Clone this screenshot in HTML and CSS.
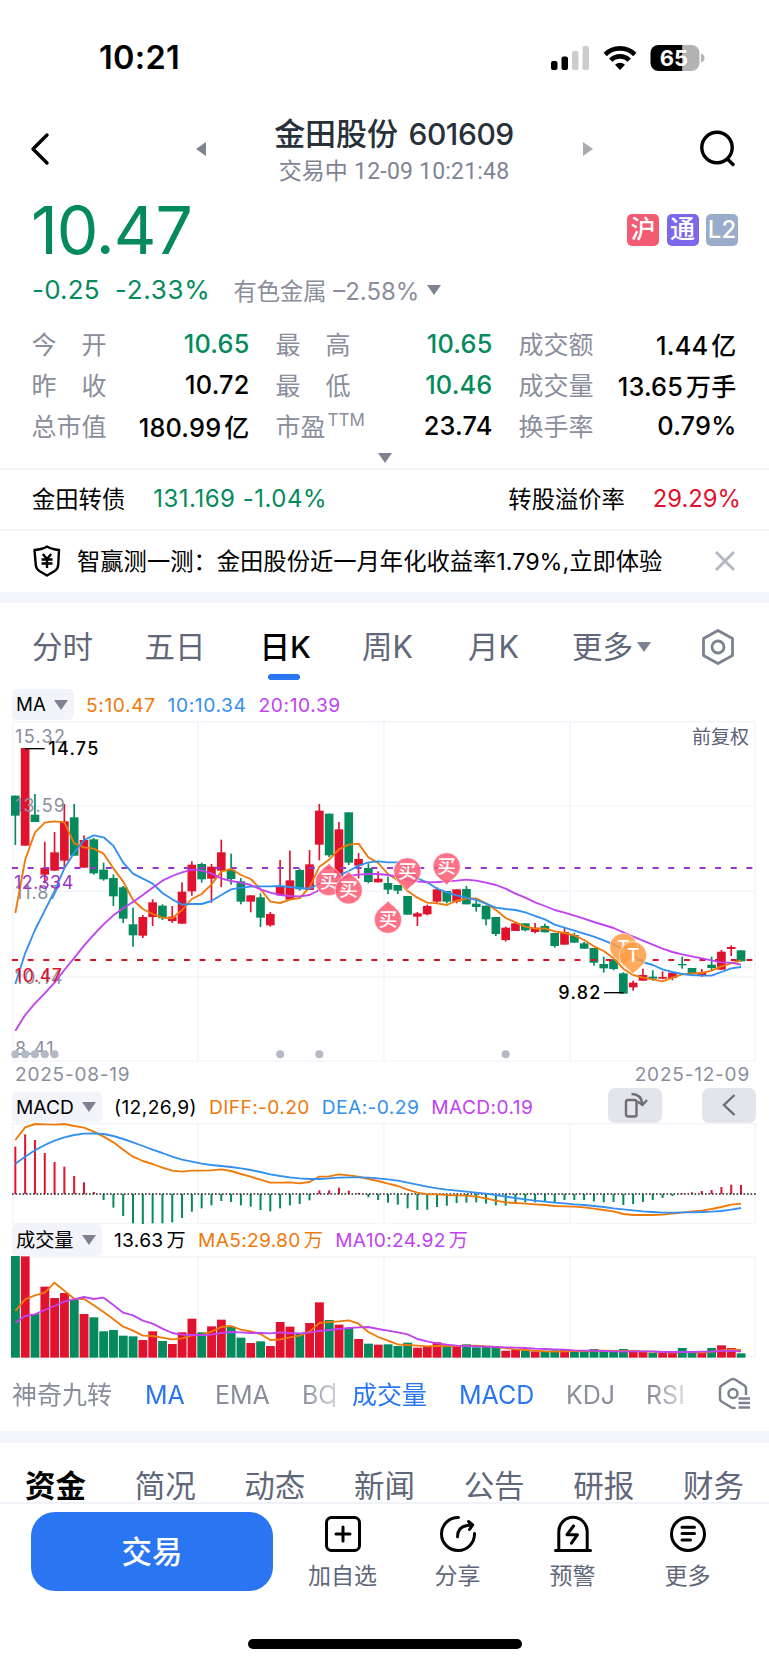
FILE: index.html
```html
<!DOCTYPE html>
<html lang="zh-CN">
<head>
    <meta charset="UTF-8">
    <meta name="viewport" content="width=device-width, initial-scale=1.0">
    <title>金田股份 601609</title>
    <link rel="stylesheet" href="styles.css">
</head>
<body>
    <header class="status-bar">
        <span class="clock">10:21</span>
        <svg class="status-icons" width="156" height="28" viewBox="0 0 156 28">
            <rect x="2" y="17" width="6.500" height="9" rx="2"/>
            <rect x="12.500" y="12.500" width="6.500" height="13.500" rx="2"/>
            <rect x="23" y="7" width="6.500" height="19" rx="2" fill="#ccc"/>
            <rect x="33.500" y="2" width="6.500" height="24" rx="2" fill="#ccc"/>
            <g fill="none" stroke="#000" stroke-width="4.600">
                <path d="M56.200 10.500a21 21 0 0 1 29.600 0"/>
                <path d="M61.700 16.200a13.200 13.200 0 0 1 18.600 0"/>
            </g>
            <path d="M66 20.800a7.200 7.200 0 0 1 10 0l-5 5.200z"/>
            <path d="M109.500 1h24v26h-24a8 8 0 0 1-8-8V9a8 8 0 0 1 8-8z"/>
            <path d="M133.500 1h9a8 8 0 0 1 8 8v10a8 8 0 0 1-8 8h-9z" fill="#b3b3b3"/>
            <path d="M152 9.500q3.500 1 3.500 4.500t-3.500 4.500z" fill="#b3b3b3"/>
            <text x="125" y="22" class="battery-text">65</text>
        </svg>
    </header>

    <nav class="title-bar">
        <svg class="back" width="20" height="34" viewBox="0 0 20 34"><path d="M17 3L3 17l14 14"/></svg>
        <i class="arrow-left"></i>
        <div class="title">
            <h1>金田股份 <span>601609</span></h1>
            <p>交易中 <span>12-09 10:21:48</span></p>
        </div>
        <i class="arrow-right"></i>
        <svg class="search" width="38" height="38" viewBox="0 0 38 38"><circle cx="17" cy="17.500" r="15.200"/><path d="M28.500 30l4.500 4.500"/></svg>
    </nav>

    <section class="price-row">
        <strong class="price">10.47</strong>
        <div class="badges">
            <span class="badge-sh">沪</span>
            <span class="badge-hk">通</span>
            <span class="badge-l2">L2</span>
        </div>
    </section>
    <section class="change-row">
        <span class="green diff">-0.25</span>
        <span class="green pct">-2.33%</span>
        <span class="sector">有色金属 <em>–2.58%</em></span>
        <i class="arrow-down"></i>
    </section>

    <section class="quotes">
        <div><label>今<b></b>开</label><span class="green">10.65</span></div>
        <div><label>最<b></b>高</label><span class="green">10.65</span></div>
        <div><label>成交额</label><span>1.44<u>亿</u></span></div>
        <div><label>昨<b></b>收</label><span>10.72</span></div>
        <div><label>最<b></b>低</label><span class="green">10.46</span></div>
        <div><label>成交量</label><span>13.65<u>万手</u></span></div>
        <div><label>总市值</label><span>180.99<u>亿</u></span></div>
        <div><label>市盈<sup>TTM</sup></label><span>23.74</span></div>
        <div><label>换手率</label><span>0.79%</span></div>
    </section>
    <div class="expand"><i class="arrow-down"></i></div>

    <section class="bond">
        <span class="bond-name">金田转债</span>
        <span class="green num">131.169 -1.04%</span>
        <span class="premium">转股溢价率</span>
        <span class="red">29.29%</span>
    </section>
    <section class="notice">
        <svg width="30" height="32" viewBox="0 0 30 32">
            <path d="M15 1.500c3 2 7 3 12 3.500l-.800 15c-.200 3-1.200 4.500-3.500 6L15 30.500 7.300 26c-2.300-1.500-3.300-3-3.500-6L2.500 5C8 4.500 12 3.500 15 1.500z"/>
            <path d="M10.800 9l4.200 5L19.200 9M9.500 14.500h11M9.500 18.500h11M15 14v9"/>
        </svg>
        <p>智赢测一测：金田股份近一月年化收益率<span>1.79%,</span>立即体验</p>
        <svg class="close" width="22" height="22" viewBox="0 0 22 22"><path d="M2 2l18 18M20 2L2 20"/></svg>
    </section>

    <nav class="periods">
        <span>分时</span>
        <span>五日</span>
        <span class="active">日K</span>
        <span>周K</span>
        <span>月K</span>
        <span>更多<i class="arrow-down"></i></span>
        <svg width="36" height="38" viewBox="0 0 36 38"><path d="M18 2.500l14.500 8v17L18 35.500l-14.500-8v-17z"/><circle cx="18" cy="19" r="6"/></svg>
    </nav>

    <div class="legend ma-legend">
        <span class="pill">MA<i class="arrow-down"></i></span>
        <span class="orange">5:10.47</span>
        <span class="blue">10:10.34</span>
        <span class="purple">20:10.39</span>
    </div>
    <svg class="chart" id="kline" width="769" height="344" viewBox="0 30 2307 1032"></svg>
    <div class="dates"><span>2025-08-19</span><span>2025-12-09</span></div>

    <div class="legend macd-legend">
        <span class="pill">MACD<i class="arrow-down"></i></span>
        <span class="params">(12,26,9)</span>
        <span class="orange">DIFF:-0.20</span>
        <span class="blue">DEA:-0.29</span>
        <span class="purple">MACD:0.19</span>
        <button class="rotate"><svg width="26" height="28" viewBox="0 0 26 28"><rect x="4" y="9" width="10.500" height="16.500" rx="2"/><path d="M9.500 3c6 0 10 3 11 10M15.500 10.500l5 3.500 4.500-5"/></svg></button>
        <button><svg width="26" height="28" viewBox="0 0 26 28"><path d="M18.500 4L8 14l10.500 10"/></svg></button>
    </div>
    <svg class="chart" id="macd" width="769" height="102" viewBox="0 126 2307 306"></svg>

    <div class="legend volume-legend">
        <span class="pill">成交量<i class="arrow-down"></i></span>
        <span class="params">13.63<u>万</u></span>
        <span class="orange">MA5:29.80<u>万</u></span>
        <span class="purple">MA10:24.92<u>万</u></span>
    </div>
    <svg class="chart" id="volume" width="769" height="102" viewBox="0 528 2307 306"></svg>

    <nav class="indicators">
        <div class="main-group">
            <span>神奇九转</span>
            <span class="on">MA</span>
            <span>EMA</span>
            <span>BO</span>
        </div>
        <div class="sub-group">
            <span class="on">成交量</span>
            <span class="on">MACD</span>
            <span>KDJ</span>
            <span>RSI</span>
        </div>
        <svg width="36" height="34" viewBox="0 0 36 34"><path d="M18.500 31.500q-2 1-4 0L4.500 25.500q-1.500-1-1.500-3V12.500q0-2 1.500-3l9.500-6q2-1 4 0l9.500 6q1.500 1 1.500 3V19"/><circle cx="16" cy="17.500" r="4.500"/><path d="M21.500 22.500h11.500M21.500 27h11.500M21.500 31.500h11.500"/></svg>
    </nav>

    <nav class="sections">
        <span class="active">资金</span>
        <span>简况</span>
        <span>动态</span>
        <span>新闻</span>
        <span>公告</span>
        <span>研报</span>
        <span>财务</span>
    </nav>

    <footer class="toolbar">
        <button class="trade">交易</button>
        <a>
            <svg width="40" height="40" viewBox="0 0 40 40"><rect x="3.500" y="3.500" width="33" height="33" rx="5"/><path d="M20 13v14M13 20h14"/></svg>
            加自选
        </a>
        <a>
            <svg width="40" height="40" viewBox="0 0 40 40"><path d="M20.500 3.500A16.500 16.500 0 1 0 36.500 19.500"/><path d="M19.500 22.700c0-7.500 4.500-11.700 14.500-11.700M30.500 7.500l4.200 3.500-3.200 4.500"/></svg>
            分享
        </a>
        <a>
            <svg width="40" height="40" viewBox="0 0 40 40"><path d="M5.800 36V17.500a14 14 0 0 1 28.400 0V36M2.500 36.500h35"/><path d="M20.500 12l-6.500 8.700h10.500l-6 8.500"/></svg>
            预警
        </a>
        <a>
            <svg width="40" height="40" viewBox="0 0 40 40"><circle cx="20" cy="20" r="16.500"/><path d="M14 13.200h12.500M14 19.500h12.500M14 26h8.500"/></svg>
            更多
        </a>
    </footer>
    <div class="home-indicator"></div>

    <script src="charts.js"></script>
</body>
</html>
```
FILE: styles.css
```css
* {
    box-sizing: border-box;
}
body {
    margin: 0;
    width: 769px;
    height: 1665px;
    overflow: hidden;
    background-color: #fff;
    color: #000;
    font-family: Inter, "Noto Sans CJK SC", sans-serif;
    white-space: nowrap;
}
h1, p {
    margin: 0;
}
i, em {
    font-style: normal;
}
u {
    text-decoration: none;
}
svg {
    display: block;
    flex: none;
}
button {
    border: 0;
    padding: 0;
    font-family: inherit;
}
.green { color: #048a5c; }
.red { color: #e1122d; }
.orange { color: #ee7a0b; }
.blue { color: #3490ee; }
.purple { color: #c043ef; }

.arrow-down {
    display: inline-block;
    border: 7px solid transparent;
    border-top: 10px solid #7d8291;
    border-bottom: 0;
}

/* status bar */
.status-bar {
    display: flex;
    justify-content: space-between;
    align-items: center;
    height: 115px;
    padding: 0 64px 0 99px;
}
.clock {
    font-size: 32.5px;
    font-weight: 600;
    letter-spacing: 0.3px;
}
.battery-text {
    fill: #fff;
    font-size: 22px;
    font-weight: 700;
    text-anchor: middle;
}

/* title */
.title-bar {
    display: flex;
    align-items: center;
    height: 80px;
    padding: 0 31px 13px 30px;
}
.title-bar svg {
    fill: none;
    stroke: #000;
    stroke-width: 3.4;
    stroke-linecap: round;
    stroke-linejoin: round;
}
.arrow-left {
    margin-left: 146px;
    border: 7px solid transparent;
    border-right: 10px solid #7d8291;
    border-left: 0;
}
.arrow-right {
    border: 7px solid transparent;
    border-left: 10px solid #a9abb0;
    border-right: 0;
}
.title {
    width: 377px;
    padding: 6px 1px 0 0;
    text-align: center;
}
.title h1 {
    height: 38px;
    line-height: 37px;
    font-size: 31px;
    font-weight: 500;
    color: #28303a;
}
.title h1 span {
    margin-left: 2px;
    font-size: 30px;
    letter-spacing: -0.4px;
}
.title p {
    height: 35px;
    line-height: 36px;
    font-size: 23px;
    color: #7f8495;
}
.title p span {
    font-family: Roboto, sans-serif;
    letter-spacing: 0.2px;
}
.search {
    margin-left: auto;
}

/* price */
.price-row {
    display: flex;
    justify-content: space-between;
    align-items: center;
    height: 71px;
    padding: 0 31px 1px 31px;
}
.price {
    font-size: 66px;
    font-weight: 400;
    letter-spacing: -1px;
    color: #048a5c;
}
.badges {
    display: flex;
    gap: 7.5px;
}
.badges span {
    width: 32px;
    height: 32px;
    border-radius: 5px;
    line-height: 31px;
    text-align: center;
    font-size: 25px;
    font-weight: 500;
    color: #fff;
}
.badge-sh { background-color: #f25b71; }
.badge-hk { background-color: #7b68ea; }
.badges .badge-l2 {
    background-color: #99acc9;
    font-size: 24px;
}
.change-row {
    display: flex;
    align-items: center;
    height: 48px;
    padding: 0 0 1px 32px;
    font-size: 26px;
    letter-spacing: 0.2px;
}
.pct {
    margin-left: 15px;
    letter-spacing: 0.7px;
}
.sector {
    margin: 0 8px 0 23px;
    font-size: 23.3px;
    letter-spacing: 0;
    color: #8a8e9c;
}
.sector em {
    font-size: 24px;
}

/* quote table */
.quotes {
    display: grid;
    grid-template-columns: 218px 217px 218px;
    grid-auto-rows: 41px;
    column-gap: 26px;
    height: 133px;
    padding: 9px 0 0 31.5px;
}
.quotes div {
    display: flex;
    justify-content: space-between;
    align-items: center;
}
.quotes label {
    padding-bottom: 2px;
    font-size: 25px;
    color: #8a8e9c;
}
.quotes label b {
    display: inline-block;
    width: 25px;
}
.quotes sup {
    position: relative;
    top: -10px;
    margin-left: 2px;
    font-size: 17px;
    line-height: 0;
    vertical-align: baseline;
}
.quotes span {
    font-size: 25.3px;
    font-weight: 500;
    letter-spacing: 0.2px;
}
.quotes span u {
    margin-left: 3px;
    font-size: 25px;
}
.expand {
    height: 21px;
    text-align: center;
    line-height: 0;
    padding-top: 6px;
}

.bond {
    display: flex;
    align-items: center;
    height: 61px;
    padding: 0 28px 2px 32px;
    border-top: 2px solid #f3f5fa;
    font-size: 23.3px;
}
.bond-name {
    margin: -2px 28px 0 0;
}
.bond .num {
    font-size: 24px;
    letter-spacing: 0.5px;
}
.bond .red {
    font-size: 23.8px;
}
.premium {
    margin: -2px 28px 0 auto;
}
.notice {
    display: flex;
    align-items: center;
    height: 74px;
    padding: 0 33px 0 32px;
    border-top: 2px solid #f3f5fa;
    border-bottom: 11px solid #f3f5fa;
    font-size: 23.3px;
}
.notice svg {
    margin-bottom: 1px;
    fill: none;
    stroke: #000;
    stroke-width: 2.4;
    stroke-linejoin: round;
}
.notice p {
    margin-left: 15px;
    padding-bottom: 4px;
}
.notice .close {
    margin-left: auto;
    stroke: #b3b8c4;
    stroke-width: 3;
}

/* chart period tabs */
.periods {
    display: grid;
    grid-template-columns: 112.5px 115px 102.5px 106px 104px 128px 40px;
    align-items: center;
    height: 86px;
    padding: 0 0 3px 32px;
    font-size: 30.5px;
    color: #61677a;
}
.periods .active {
    position: relative;
    font-weight: 500;
    color: #000;
}
.periods .active::after {
    content: "";
    position: absolute;
    left: 8px;
    bottom: -13px;
    width: 32px;
    height: 6px;
    border-radius: 3px;
    background-color: #2a76f2;
}
.periods .arrow-down {
    margin: 0 0 6px 4px;
}
.periods svg, .indicators svg {
    fill: none;
    stroke: #7d8291;
    stroke-width: 2.8;
    stroke-linejoin: round;
}
.periods svg {
    margin-top: 4px;
}

/* charts */
.legend {
    display: flex;
    align-items: center;
    padding-left: 12px;
    font-size: 19.2px;
    letter-spacing: 0.4px;
}
.pill {
    display: flex;
    align-items: center;
    justify-content: space-between;
    align-self: stretch;
    width: 90px;
    padding: 0 6px 0 4px;
    border-radius: 5px;
    background-color: #f3f4f9;
    letter-spacing: 0;
}
.ma-legend {
    height: 31px;
    letter-spacing: 0.6px;
}
.ma-legend .pill {
    width: 62px;
    margin-right: 12px;
    font-size: 18.7px;
}
.ma-legend .orange, .ma-legend .blue {
    margin-right: 12px;
}
.macd-legend {
    height: 34px;
    padding-right: 13px;
}
.macd-legend span {
    padding-top: 3px;
}
.macd-legend .pill {
    align-self: flex-end;
    height: 30px;
    padding-top: 0;
}
.params {
    margin: 0 12px;
}
.legend .blue {
    margin: 0 12px;
}
.ma-legend .blue {
    margin-left: 0;
}
.legend button {
    width: 54px;
    height: 35px;
    border-radius: 7px;
    background-color: #e4e5ea;
}
.legend button svg {
    margin: auto;
    fill: none;
    stroke: #6d6e72;
    stroke-width: 2.4;
}
.legend .rotate {
    margin: 0 40px 0 auto;
}
.volume-legend {
    height: 32px;
    line-height: 30px;
    letter-spacing: 0.3px;
}
.volume-legend span {
    padding-bottom: 1px;
}
.volume-legend .purple {
    margin-left: 12px;
}
.legend u {
    margin-left: 3px;
}
.dates {
    display: flex;
    justify-content: space-between;
    height: 24px;
    padding: 0 19px 0 15px;
    line-height: 21px;
    font-size: 19px;
    letter-spacing: 0.8px;
    color: #8a8e9c;
}
.chart text {
    font-size: 54px;
}
.chart .adjust {
    font-size: 57px;
    text-anchor: end;
    fill: #5c6275;
}
.chart .pin {
    fill: #fff;
    font-size: 56px;
    font-weight: 500;
    text-anchor: middle;
}

/* indicator picker */
.indicators {
    display: flex;
    align-items: center;
    height: 85px;
    padding: 0 0 0 12px;
    border-bottom: 12px solid #f3f5fa;
    font-size: 25px;
    color: #8a8e9c;
}
.indicators div {
    display: grid;
    align-items: center;
    height: 40px;
    line-height: 40px;
    overflow: hidden;
}
.indicators .main-group {
    position: relative;
    width: 323px;
    grid-template-columns: 133px 70px 87px 60px;
    -webkit-mask-image: linear-gradient(90deg, #000 290px, rgba(0, 0, 0, 0.4) 324px);
}
.indicators .main-group::after {
    content: "";
    position: absolute;
    right: 0;
    top: 8px;
    width: 2px;
    height: 24px;
    background-color: #8a8e9c;
}
.indicators .sub-group {
    width: 350px;
    margin-left: 17px;
    grid-template-columns: 107px 107px 80px 50px;
    -webkit-mask-image: linear-gradient(90deg, #000 300px, rgba(0, 0, 0, 0.2) 338px);
}
.indicators svg {
    margin: 0 0 3px 15px;
    stroke-width: 2.5;
}
.indicators .on {
    color: #2a76f2;
}

.sections {
    display: flex;
    justify-content: space-between;
    height: 59px;
    padding: 21px 25px 0 25px;
    line-height: 44px;
    font-size: 30.5px;
    color: #61677a;
}
.sections .active {
    font-weight: 700;
    color: #000;
}

/* bottom bar */
.toolbar {
    display: flex;
    height: 137px;
    padding: 8px 0 0 31px;
    border-top: 2px solid #f0f2f7;
}
.trade {
    width: 242px;
    height: 79px;
    margin-right: 12px;
    padding-bottom: 3px;
    border-radius: 24px;
    background-color: #2a76f2;
    color: #fff;
    font-size: 30.5px;
    font-weight: 500;
}
.toolbar a {
    display: flex;
    flex-direction: column;
    align-items: center;
    width: 115px;
    padding-top: 2px;
    font-size: 23px;
    line-height: 44px;
    color: #61677a;
}
.toolbar svg {
    fill: none;
    stroke: #000;
    stroke-width: 3;
    stroke-linecap: round;
    stroke-linejoin: round;
}
.home-indicator {
    width: 274px;
    height: 10px;
    margin: 0 auto;
    border-radius: 5px;
    background-color: #000;
}
```
FILE: charts.js
```js
const RED = '#e1122d';
const GREEN = '#048a5c';
const ORANGE = '#ee7a0b';
const BLUE = '#3490ee';
const PURPLE = '#c043ef';
const GRID = '#f4f5fb';
const GRAY = '#8a8e9c';

// color, high, body top, body bottom, low
const candles = [
    ['G', 257, 257, 317, 405], ['R', 114, 114, 407, 407], ['G', 252, 314, 336, 336], ['R', 395, 473, 494, 520],
    ['R', 366, 427, 482, 482], ['R', 282, 334, 452, 470], ['G', 282, 322, 437, 437], ['R', 376, 390, 473, 473],
    ['G', 384, 388, 490, 494], ['G', 458, 479, 508, 512], ['G', 493, 504, 559, 588], ['G', 528, 532, 626, 639],
    ['G', 593, 643, 676, 710], ['R', 615, 621, 677, 684], ['R', 568, 577, 621, 648], ['G', 583, 587, 625, 630],
    ['R', 588, 620, 633, 639], ['R', 517, 545, 641, 641], ['R', 454, 464, 544, 557], ['G', 458, 462, 508, 518],
    ['R', 462, 470, 506, 578], ['R', 389, 427, 482, 531], ['G', 431, 479, 507, 524], ['G', 504, 514, 575, 583],
    ['R', 556, 556, 575, 607], ['G', 550, 562, 623, 651], ['R', 606, 612, 646, 650], ['R', 450, 531, 556, 556],
    ['R', 422, 511, 569, 569], ['G', 476, 480, 538, 542], ['R', 420, 463, 540, 540], ['R', 282, 302, 404, 451],
    ['G', 311, 311, 436, 441], ['R', 336, 358, 500, 500], ['G', 307, 307, 458, 465], ['R', 429, 447, 467, 505],
    ['G', 460, 474, 516, 520], ['R', 484, 506, 517, 517], ['G', 500, 519, 539, 552], ['G', 525, 525, 542, 552],
    ['G', 558, 558, 614, 614], ['R', 606, 610, 620, 648], ['R', 584, 588, 613, 616], ['R', 532, 538, 575, 578],
    ['G', 543, 543, 575, 580], ['R', 538, 538, 575, 580], ['G', 528, 537, 583, 583], ['G', 570, 581, 591, 605],
    ['G', 587, 587, 628, 646], ['G', 621, 621, 672, 678], ['R', 650, 653, 690, 695], ['R', 640, 640, 663, 663],
    ['G', 640, 640, 661, 664], ['R', 639, 653, 666, 670], ['G', 641, 648, 667, 667], ['G', 669, 669, 708, 713],
    ['R', 654, 666, 704, 704], ['G', 668, 675, 698, 698], ['G', 696, 700, 716, 716], ['G', 714, 714, 758, 767],
    ['G', 740, 762, 775, 788], ['G', 748, 748, 777, 781], ['G', 787, 790, 851, 851], ['R', 812, 818, 832, 842],
    ['R', 776, 795, 812, 812], ['G', 781, 800, 806, 812], ['R', 784, 801, 806, 808], ['R', 788, 788, 804, 811],
    ['G', 740, 762, 766, 776], ['G', 774, 774, 792, 792], ['R', 777, 787, 796, 800], ['G', 740, 764, 774, 780],
    ['R', 720, 725, 779, 779], ['R', 706, 711, 717, 738], ['G', 721, 721, 754, 754]
];
const ma5 = [609, 450, 367, 338, 334, 337, 400, 412, 416, 431, 475, 515, 570, 597, 612, 623, 625, 600, 567, 552, 523, 485, 477, 495, 507,
    537, 575, 579, 569, 564, 532, 470, 449, 418, 404, 401, 442, 459, 492, 511, 543, 563, 578, 580, 585, 572, 566, 565, 580, 600,
    624, 637, 650, 656, 655, 664, 669, 676, 690, 709, 723, 745, 776, 795, 803, 808, 814, 803, 793, 790, 789, 782, 769, 760, 751];
const ma10 = [822, 730, 660, 602, 543, 475, 428, 390, 376, 382, 407, 458, 491, 506, 521, 549, 568, 584, 582, 582, 573, 555, 538, 533, 530,
    529, 529, 528, 531, 534, 536, 521, 508, 497, 483, 467, 457, 454, 457, 457, 475, 505, 517, 536, 547, 556, 563, 570, 581, 593,
    597, 600, 607, 618, 628, 644, 653, 662, 671, 680, 691, 703, 718, 738, 756, 765, 778, 786, 792, 795, 797, 797, 786, 775, 771];
const ma20 = [962, 915, 880, 850, 818, 780, 744, 707, 674, 643, 616, 595, 576, 555, 533, 512, 498, 487, 479, 482, 490, 505, 513, 518, 525,
    538, 548, 555, 558, 559, 555, 540, 525, 510, 498, 494, 492, 492, 495, 500, 510, 514, 517, 516, 514, 512, 509, 512, 518, 525,
    536, 551, 563, 577, 588, 600, 608, 617, 626, 636, 645, 654, 667, 680, 692, 704, 716, 726, 733, 739, 745, 751, 757, 758, 764];

const macdBars = [200, 163, 180, 219, 246, 260, 288, 307, 336, 360, 383, 408, 430, 434, 430, 430, 427, 414, 395, 385, 376, 363, 366, 376, 380,
    390, 394, 385, 376, 372, 361, 331, 331, 323, 332, 339, 352, 360, 368, 374, 385, 390, 389, 381, 377, 369, 368, 367, 371, 376,
    377, 371, 367, 367, 363, 366, 360, 360, 360, 364, 367, 366, 375, 372, 366, 360, 354, 348, 340, 337, 333, 330, 321, 314, 315];
const diff = [180, 142, 132, 133, 134, 132, 138, 143, 155, 170, 187, 209, 230, 243, 252, 263, 272, 275, 272, 272, 271, 268, 273, 282, 290,
    299, 308, 308, 307, 310, 306, 290, 289, 283, 286, 290, 297, 303, 311, 318, 329, 338, 343, 343, 345, 346, 347, 350, 355, 362,
    367, 369, 371, 373, 375, 378, 379, 380, 382, 386, 390, 394, 402, 405, 405, 405, 404, 401, 398, 394, 392, 387, 381, 374, 371];
const dea = [251, 230, 211, 195, 182, 172, 165, 161, 160, 162, 168, 177, 187, 198, 209, 219, 230, 239, 245, 251, 255, 258, 261, 265, 270,
    276, 283, 288, 292, 295, 297, 297, 295, 293, 292, 292, 293, 295, 298, 302, 308, 314, 320, 325, 329, 332, 335, 338, 341, 345,
    350, 354, 358, 362, 365, 368, 370, 373, 375, 378, 381, 385, 388, 391, 394, 396, 398, 398, 397, 397, 396, 395, 393, 389, 384];

const volumes = [527, 529, 702, 620, 654, 639, 658, 702, 712, 754, 750, 767, 769, 780, 754, 783, 792, 757, 716, 757, 739, 719, 740, 773, 789,
    784, 798, 726, 740, 762, 729, 667, 720, 734, 744, 777, 791, 794, 793, 798, 788, 803, 801, 787, 800, 800, 793, 802, 800, 802,
    812, 810, 812, 814, 812, 811, 807, 812, 812, 807, 812, 814, 807, 814, 816, 818, 818, 819, 804, 818, 819, 804, 796, 804, 820];
const volMa5 = [693, 658, 646, 638, 608, 632, 656, 657, 676, 696, 718, 740, 752, 767, 768, 773, 778, 775, 766, 765, 755, 741, 738, 749, 754,
    762, 780, 778, 772, 767, 755, 729, 726, 724, 721, 731, 756, 771, 782, 793, 795, 797, 799, 798, 798, 798, 797, 797, 799, 801,
    804, 808, 810, 812, 814, 815, 814, 813, 813, 812, 812, 813, 813, 813, 814, 815, 816, 818, 816, 816, 818, 815, 811, 809, 810];
const volMa10 = [728, 708, 703, 690, 678, 664, 658, 651, 657, 653, 675, 698, 706, 722, 731, 746, 759, 764, 765, 765, 764, 759, 756, 757, 759,
    759, 760, 757, 759, 760, 758, 753, 750, 747, 744, 742, 741, 747, 752, 757, 763, 777, 784, 790, 794, 797, 798, 799, 800, 801,
    802, 803, 804, 806, 807, 808, 809, 811, 812, 812, 813, 814, 815, 814, 814, 814, 816, 816, 816, 816, 815, 815, 812, 813, 814];

const x = i => 46 + 29.42 * i;
const rect = (left, top, w, h, fill) => `<rect x="${left}" y="${top}" width="${w}" height="${h}" fill="${fill}"/>`;
const line = (x1, y1, x2, y2, color, w, extra = '') =>
    `<line x1="${x1}" y1="${y1}" x2="${x2}" y2="${y2}" stroke="${color}" stroke-width="${w}" ${extra}/>`;
const curve = (ys, color) =>
    `<polyline points="${ys.map((y, i) => x(i) + ',' + y).join(' ')}" fill="none" stroke="${color}" stroke-width="5.6" stroke-linejoin="round"/>`;
const label = (str, left, base, w, color, weight = 400) =>
    `<text x="${left}" y="${base}" textLength="${w}" fill="${color}" font-weight="${weight}">${str}</text>`;

function grid(rows) {
    const top = rows[0];
    const bottom = rows[rows.length - 1];
    return rows.map(y => line(36, y, 2268, y, GRID, 5)).join('') +
        [38, 594, 1152, 1710, 2265].map(v => line(v, top, v, bottom, GRID, 5)).join('');
}

// up = tip points to the candle above
function pin(cx, cy, up, str, color) {
    const d = up
        ? 'M0-56C8-42 41-30 41 1A41 41 0 0 1-41 1C-41-30-8-42 0-56z'
        : 'M0 56C8 42 41 30 41-1A41 41 0 0 0-41-1C-41 30-8 42 0 56z';
    return `<g transform="translate(${cx} ${cy})"><path d="${d}" fill="${color}" fill-opacity="0.85" stroke="#fff" stroke-opacity="0.6" stroke-width="3"/>` +
        `<text class="pin" y="19">${str}</text></g>`;
}

function drawKline() {
    let out = grid([35, 288, 544, 800, 1053]);
    out += '<text class="adjust" x="2247" y="101">前复权</text>';
    candles.forEach(([c, high, top, bottom, low], i) => {
        const color = c === 'R' ? RED : GREEN;
        out += rect(x(i) - 2.5, high, 5, low - high, color) + rect(x(i) - 13, top, 26, bottom - top, color);
    });
    out += label('15.32', 45, 98, 150, GRAY) + label('13.59', 45, 307, 150, GRAY) + label('11.87', 45, 566, 134, GRAY) +
        label('10.14', 45, 822, 142, GRAY) + label('8.41', 45, 1035, 116, GRAY);
    out += line(36, 474, 2265, 474, '#9a35c8', 6, 'stroke-dasharray="18 28.875"');
    out += line(36, 750, 2265, 750, '#d8142c', 6, 'stroke-dasharray="18 28.875"');
    out += curve(ma5, ORANGE) + curve(ma10, BLUE) + curve(ma20, PURPLE);
    out += label('12.334', 42, 537, 178, '#9a35c8') + label('10.47', 44, 816, 142, RED);
    [0, 1, 2, 3, 4, 27, 31, 50].forEach(i => {
        out += `<circle cx="${x(i)}" cy="1033" r="12" fill="#b4b9c8"/>`;
    });
    out += pin(987, 515, true, '买', '#ff5a72') + pin(1046, 540, true, '买', '#ff5a72') + pin(1164, 628, true, '买', '#ff5a72') +
        pin(1222, 485, false, '买', '#ff5a72') + pin(1340, 470, false, '买', '#ff5a72') +
        pin(1870, 712, false, 'T', '#ff9d45') + pin(1899, 737, false, 'T', '#ff9d45');
    out += line(75, 116, 134, 116, '#000', 4) + label('14.75', 145, 136, 150, '#000', 500);
    out += line(1812, 848, 1870, 848, '#000', 4) + label('9.82', 1675, 868, 126, '#000', 500);
    document.getElementById('kline').innerHTML = out;
}

function drawMacd() {
    let out = grid([131, 431]);
    macdBars.forEach((y, i) => {
        out += y < 342 ? rect(x(i) - 3, y, 6, 342 - y, RED) : rect(x(i) - 3, 342, 6, y - 342, GREEN);
    });
    out += line(36, 342, 2268, 342, '#222', 5, 'stroke-dasharray="5 5.5"');
    out += curve(diff, ORANGE) + curve(dea, BLUE);
    document.getElementById('macd').innerHTML = out;
}

function drawVolume() {
    let out = grid([530, 830]);
    volumes.forEach((y, i) => {
        out += rect(x(i) - 13, y, 26.5, 833 - y, candles[i][0] === 'R' ? RED : GREEN);
    });
    out += curve(volMa5, ORANGE) + curve(volMa10, PURPLE);
    document.getElementById('volume').innerHTML = out;
}

drawKline();
drawMacd();
drawVolume();
```
